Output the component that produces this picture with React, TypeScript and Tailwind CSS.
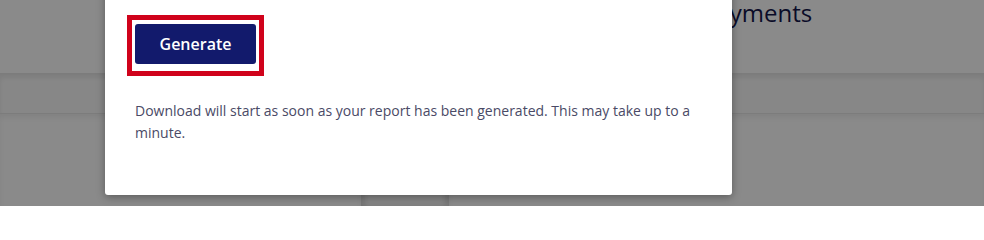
export default function App() {
  return (
    <div className="relative h-[206px] w-[984px] overflow-hidden bg-white font-['Open_Sans','Liberation_Sans',sans-serif]">
      {/* page behind the dialog */}
      <div className="flex h-[73px] items-start bg-white pl-[702px]">
        <h1 className="-mt-[4px] text-[24px] leading-[34px] text-[#14164a]">Payments</h1>
      </div>
      <div className="h-[40px] border-t border-[#e6e6e6] bg-[#fafafa] shadow-[inset_0_4px_5px_rgba(0,0,0,0.08)]" />
      <div className="flex h-[93px] border-t border-[#e6e6e6]">
        <div className="w-[361px] bg-white shadow-[inset_0_4px_5px_rgba(0,0,0,0.06)]" />
        <div className="w-[88px] bg-[#f7f7f7] shadow-[inset_4px_4px_5px_rgba(0,0,0,0.1),inset_-4px_0_5px_rgba(0,0,0,0.1)]" />
        <div className="flex-1 bg-white shadow-[inset_0_4px_5px_rgba(0,0,0,0.06)]" />
      </div>

      {/* overlay */}
      <div className="absolute inset-0 bg-black/[0.46]" />

      {/* dialog */}
      <div className="absolute left-[105px] top-[-40px] w-[627px] rounded-b-[3px] bg-white px-[30px] pb-[51px] pt-[55px] shadow-[0_2px_8px_rgba(0,0,0,0.35)]">
        <div className="-ml-[8px] inline-flex border-[5px] border-[#d0021b] pb-[7px] pl-[3px] pr-[3px] pt-[4px]">
          <button className="h-[40px] w-[121px] rounded-[3px] bg-[#121a6c] text-[16px] font-semibold text-white">
            Generate
          </button>
        </div>
        <p className="mt-[24px] text-[14px] leading-[22px] text-[#4a4a66]">
          Download will start as soon as your report has been generated. This may take up to a minute.
        </p>
      </div>
    </div>
  );
}
